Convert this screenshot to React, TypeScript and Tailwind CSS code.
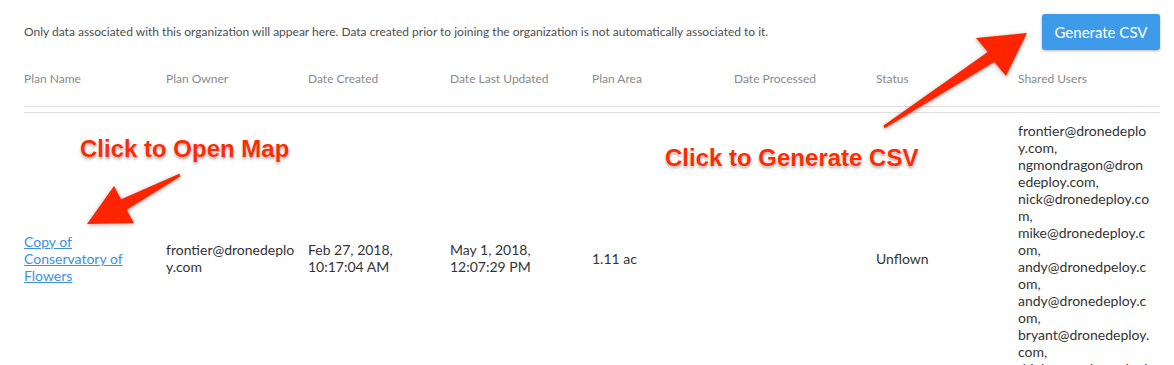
import React from 'react';

const headers = [
  'Plan Name',
  'Plan Owner',
  'Date Created',
  'Date Last Updated',
  'Plan Area',
  'Date Processed',
  'Status',
  'Shared Users',
];

const sharedUsers = [
  'frontier@dronedeploy.com',
  'ngmondragon@dronedeploy.com',
  'nick@dronedeploy.com',
  'mike@dronedeploy.com',
  'andy@dronedpeloy.com',
  'andy@dronedeploy.com',
  'bryant@dronedeploy.com',
  'ddelaney@dronedeploy.com',
];

function Arrows() {
  return (
    <svg
      className="pointer-events-none absolute inset-0 h-full w-full drop-shadow-[0_1px_2px_rgba(0,0,0,0.35)]"
      viewBox="0 0 1174 365"
    >
      {/* arrow to the plan link */}
      <polygon
        fill="#ff2400"
        points="179.3,173.7 121.2,199.2 114,186 87,224 134,223 126.8,209.8 180.7,176.3"
      />
      {/* arrow to the csv button */}
      <polygon
        fill="#ff2400"
        points="883.2,125.7 987.7,52 976,38 1027,33 1006,76 994.3,62 884.8,128.3"
      />
    </svg>
  );
}

export default function App() {
  return (
    <div
      className="relative h-[365px] overflow-hidden bg-white pl-6 pr-[14px] text-[#333]"
      style={{ fontFamily: "Lato, 'Open Sans', sans-serif" }}
    >
      <div className="flex items-center justify-between pt-[14px]">
        <p className="text-[12px] text-[#4d4d4d]">
          Only data associated with this organization will appear here. Data created prior to joining the organization is not automatically associated to it.
        </p>
        <button className="h-9 w-[118px] rounded-[3px] bg-[#3d9be9] text-[15px] text-white shadow-[0_1px_3px_rgba(0,0,0,0.3)]">
          Generate CSV
        </button>
      </div>

      <div className="mt-[21px] grid grid-cols-[repeat(8,142px)] border-b border-[#dedede] pb-[20px] text-[12px] leading-[15px] text-[#8a8a8a]">
        {headers.map((h) => (
          <div key={h}>{h}</div>
        ))}
      </div>

      <div className="mt-[5px] grid grid-cols-[repeat(8,142px)] items-center border-t border-[#dedede] py-[9px] text-[14px] leading-[17px]">
        <div className="pr-[10px]">
          <a href="#" className="text-[#3a92e0] underline">
            Copy of Conservatory of Flowers
          </a>
        </div>
        <div className="break-words pr-[10px]">frontier@dronedeploy.com</div>
        <div className="pr-[10px]">Feb 27, 2018, 10:17:04 AM</div>
        <div className="pr-[10px]">May 1, 2018, 12:07:29 PM</div>
        <div className="pr-[10px]">1.11 ac</div>
        <div className="pr-[10px]"></div>
        <div className="pr-[10px]">Unflown</div>
        <div className="break-words pr-[10px]">
          {sharedUsers.map((u, i) => (
            <div key={i}>{u}{','}</div>
          ))}
        </div>
      </div>

      <Arrows />

      <div className="absolute left-[80px] top-[137px] text-[24px] leading-none font-bold text-[#ff2a00] [font-family:'Liberation_Sans',Arial,sans-serif] [text-shadow:0_0_2px_#fff,0_2px_3px_rgba(0,0,0,0.35)]">
        Click to Open Map
      </div>
      <div className="absolute left-[665px] top-[146px] text-[24px] leading-none font-bold text-[#ff2a00] [font-family:'Liberation_Sans',Arial,sans-serif] [text-shadow:0_0_2px_#fff,0_2px_3px_rgba(0,0,0,0.35)]">
        Click to Generate CSV
      </div>
    </div>
  );
}
